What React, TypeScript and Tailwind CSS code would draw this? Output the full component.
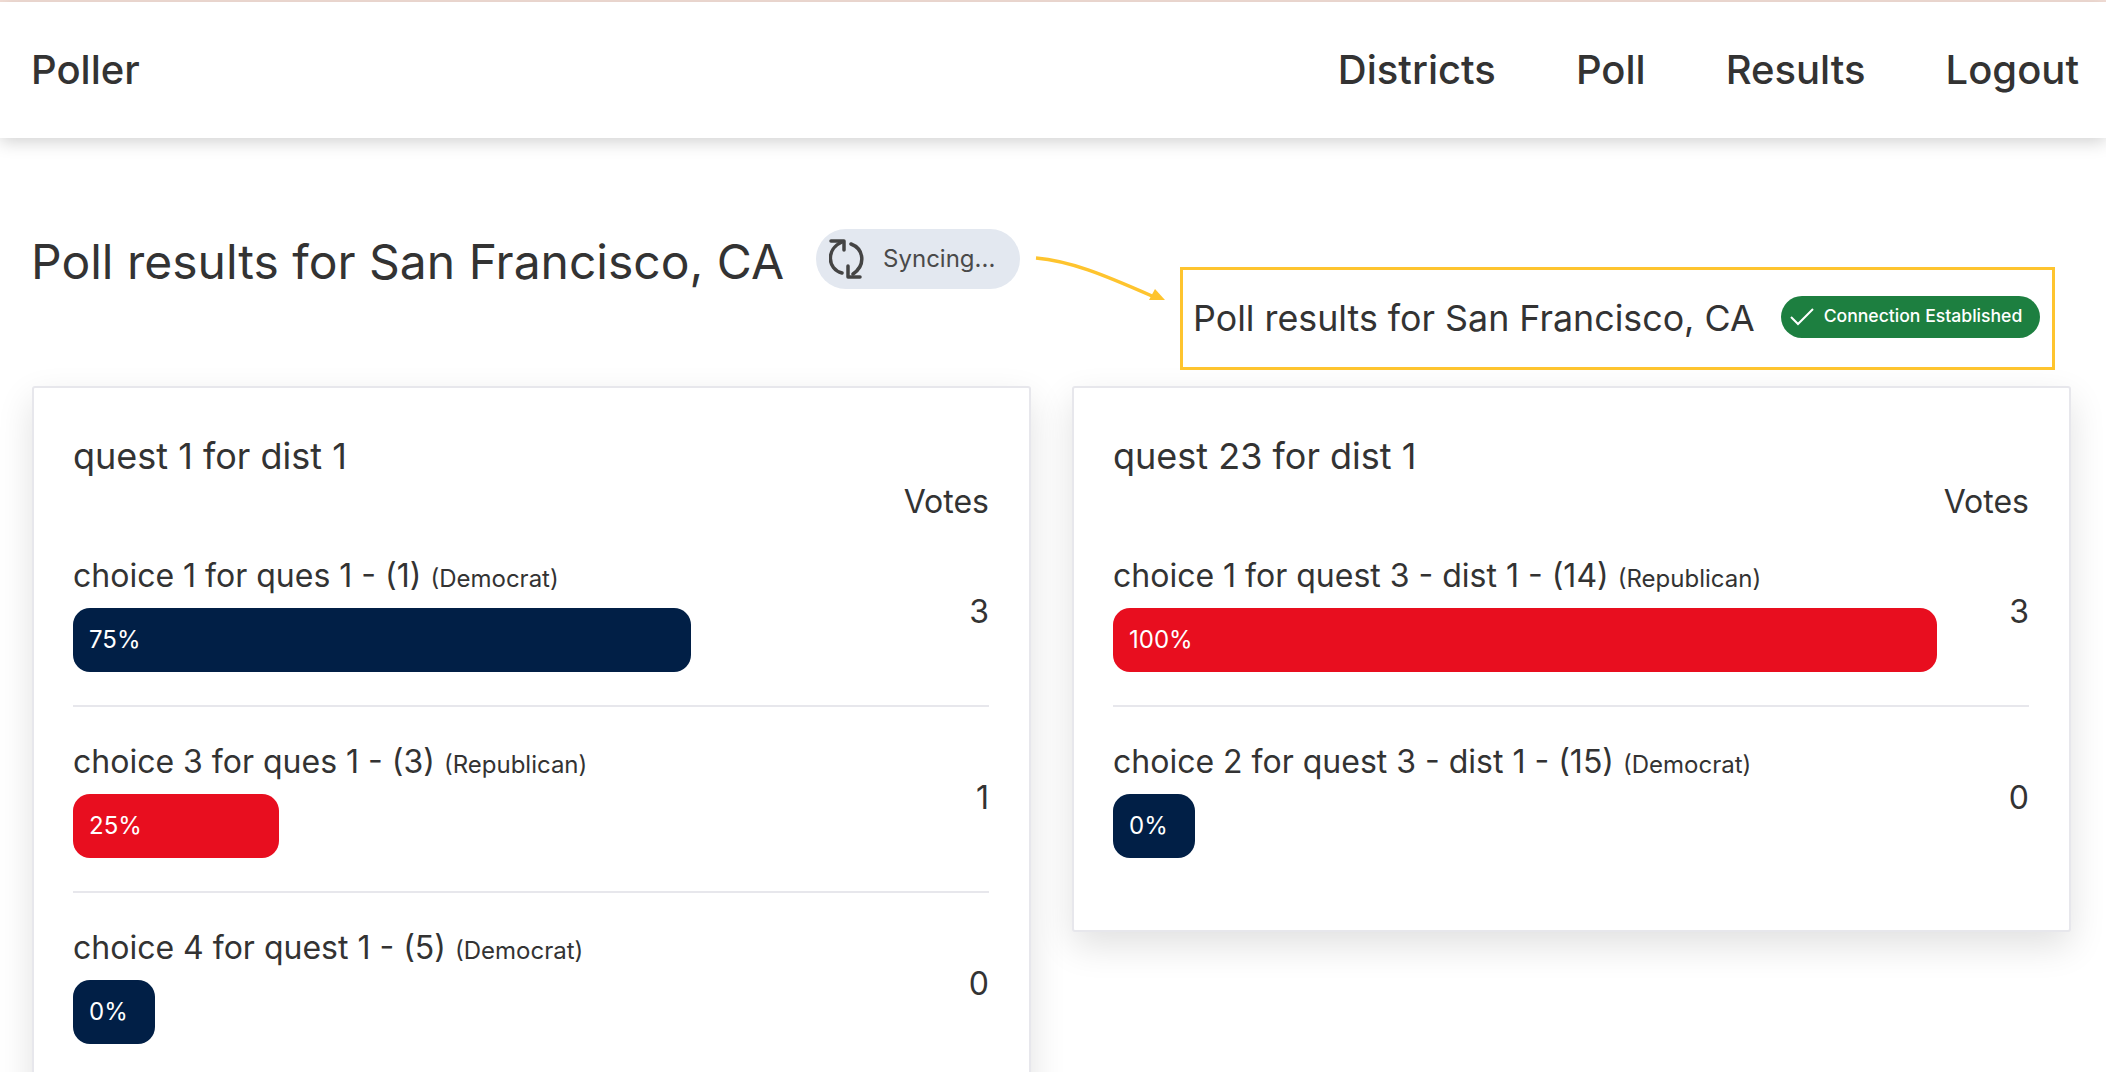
import React from "react";

const font = { fontFamily: "Inter, 'Liberation Sans', sans-serif" };

type Row = { label: string; party: string; pct: number; votes: number };

function Bar({ pct, party }: { pct: number; party: string }) {
  const bg = party === "Democrat" ? "bg-[#011f46]" : "bg-[#e80e1f]";
  return (
    <div
      className={`${bg} h-16 rounded-[17px] flex items-center pl-4 text-[24px] text-white min-w-[82px]`}
      style={{ width: `${pct}%` }}
    >
      {pct}%
    </div>
  );
}

function Card({ title, rows, grow }: { title: string; rows: Row[]; grow?: boolean }) {
  return (
    <div
      className={`flex-1 min-w-0 bg-white border-2 border-[#e7e7ec] rounded-[3px] pl-[39px] pr-[40px] pt-[47px] shadow-[0_14px_36px_rgba(0,0,0,0.12)] ${grow ? "h-[800px]" : "h-[546px]"}`}
    >
      <h2 className="text-[36px] leading-[44px] text-[#333] -mt-px">{title}</h2>
      <div className="text-right text-[32px] leading-[44px] text-[#333] mt-[2px]">Votes</div>
      {rows.map((r, i) => (
        <div
          key={i}
          className={`flex h-[186px] pt-[33px] ${i === 0 ? "-mt-[3px]" : ""} ${i < rows.length - 1 ? "border-b-2 border-[#e7e7ec]" : ""}`}
        >
          <div className="flex-1 min-w-0">
            <div className="text-[32px] leading-[44px] text-[#333] whitespace-nowrap">
              {r.label} <span className="text-[24px]">({r.party})</span>
            </div>
            <div className="mt-[7px]">
              <Bar pct={r.pct} party={r.party} />
            </div>
          </div>
          <div className="w-[92px] text-right text-[32px] leading-[44px] text-[#333] pt-[36px]">{r.votes}</div>
        </div>
      ))}
    </div>
  );
}

export default function App() {
  return (
    <div style={font} className="relative w-[2106px] h-[1072px] overflow-hidden bg-white text-[#333]">
      <div className="h-[2px] bg-[#f5e0d8]" />
      <nav className="h-[136px] flex items-center justify-between pl-[31px] pr-[27px] bg-white shadow-[0_4px_16px_rgba(0,0,0,0.18)]">
        <a className="text-[40px] font-medium">Poller</a>
        <div className="flex gap-[80px] text-[40px] font-medium">
          <a>Districts</a>
          <a>Poll</a>
          <a>Results</a>
          <a>Logout</a>
        </div>
      </nav>

      <div className="pl-8 pr-[35px] pt-[94px]">
        <div className="flex items-center h-[60px] mb-[94px] -ml-px">
          <h1 className="text-[48px] leading-[60px] text-[#333] whitespace-nowrap">Poll results for San Francisco, CA</h1>
          <div className="ml-[32px] -mt-[6px] h-[60px] w-[204px] rounded-full bg-[#e3e8f0] flex items-center pl-[13px] text-[#4a4a4a] text-[24px]">
            <svg width="36" height="40" viewBox="0 0 36 40" fill="none" stroke="#444" strokeWidth="3.5" strokeLinecap="round" strokeLinejoin="round">
              <path d="M2 2 H15 V11" />
              <path d="M13 3 C-3 10 -2 30 13 34" />
              <path d="M22 5 C35 10 37 26 24 35" />
              <path d="M31 38 H19 V27" />
            </svg>
            <span className="ml-[18px]">Syncing...</span>
          </div>
        </div>
        <div className="flex gap-[41px] items-start">
          <Card
            grow
            title="quest 1 for dist 1"
            rows={[
              { label: "choice 1 for ques 1 - (1)", party: "Democrat", pct: 75, votes: 3 },
              { label: "choice 3 for ques 1 - (3)", party: "Republican", pct: 25, votes: 1 },
              { label: "choice 4 for quest 1 - (5)", party: "Democrat", pct: 0, votes: 0 },
            ]}
          />
          <Card
            title="quest 23 for dist 1"
            rows={[
              { label: "choice 1 for quest 3 - dist 1 - (14)", party: "Republican", pct: 100, votes: 3 },
              { label: "choice 2 for quest 3 - dist 1 - (15)", party: "Democrat", pct: 0, votes: 0 },
            ]}
          />
        </div>
      </div>

      {/* annotation overlay */}
      <svg className="absolute left-[1030px] top-[250px]" width="140" height="60" viewBox="0 0 140 60" fill="none">
        <path d="M6 8 C40 11 72 24 122 46" stroke="#fec42e" strokeWidth="3.5" />
        <path d="M125 39 L119 50 L135 50 Z" fill="#fec42e" />
      </svg>
      <div className="absolute left-[1180px] top-[267px] w-[875px] h-[103px] border-[3px] border-[#fec42e] bg-white flex items-center pl-[10px]">
        <span className="text-[35.8px] text-[#333] whitespace-nowrap">Poll results for San Francisco, CA</span>
        <div className="ml-[26px] -mt-[4px] h-[42px] w-[259px] rounded-full bg-[#1d7f40] flex items-center pl-[9px] text-white text-[17.6px] font-medium whitespace-nowrap">
          <svg width="24" height="18" viewBox="0 0 24 18" fill="none" stroke="#fff" strokeWidth="2">
            <path d="M1 9 L8 16 L23 1" />
          </svg>
          <span className="ml-[10px]">Connection Established</span>
        </div>
      </div>
    </div>
  );
}
